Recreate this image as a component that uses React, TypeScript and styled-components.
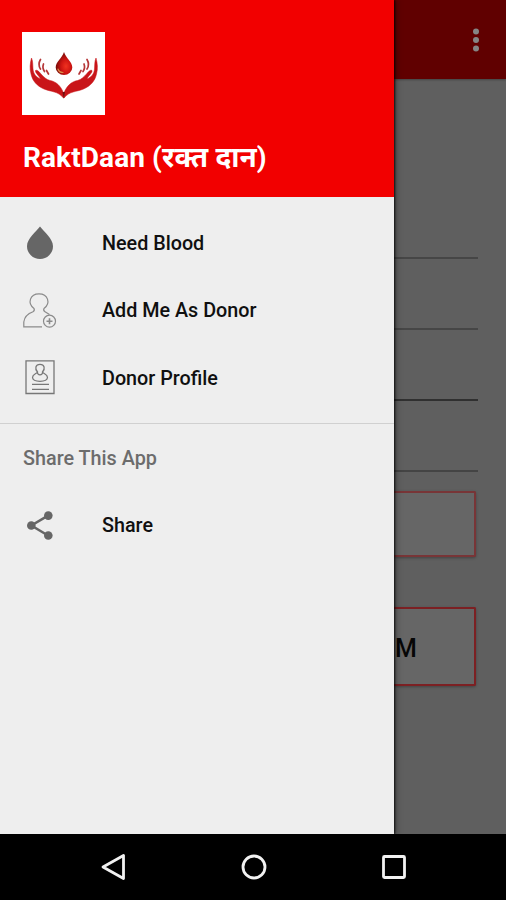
import React from "react";
import styled, { createGlobalStyle } from "styled-components";

const GlobalStyle = createGlobalStyle`
  * { box-sizing: border-box; }
  body { margin: 0; background: #000; }
`;

const Screen = styled.div`
  width: 506px;
  height: 900px;
  display: flex;
  flex-direction: column;
  overflow: hidden;
  font-family: Roboto, "Noto Sans", sans-serif;
`;

const Content = styled.div`
  height: 834px;
  display: flex;
`;

const Drawer = styled.aside`
  width: 394px;
  flex: none;
  background: #eeeeee;
  position: relative;
  z-index: 1;
  box-shadow: 1px 0 2px rgba(0, 0, 0, 0.85), 3px 0 6px rgba(0, 0, 0, 0.25);
`;

const Header = styled.header`
  height: 197px;
  padding: 32px 22px 0;
  background: #f20000;
`;

const Logo = styled.svg`
  display: block;
  width: 83px;
  height: 83px;
  background: #fff;
`;

const Title = styled.h1`
  margin: 24px 0 0 1px;
  font-size: 28px;
  line-height: 38px;
  font-weight: 700;
  letter-spacing: 0.1px;
  color: #fff;
  white-space: nowrap;
`;

const Menu = styled.ul`
  list-style: none;
  margin: 0;
  padding: 12.5px 0 10.5px;
`;

const MenuItem = styled.li`
  height: 67.5px;
  padding-left: 22px;
  display: flex;
  align-items: center;
  gap: 44px;
  font-size: 19.75px;
  font-weight: 500;
  color: #101010;
`;

const MenuIcon = styled.svg`
  width: 36px;
  height: 36px;
  flex: none;
`;

const Label = styled.span`
  padding-top: 1px;
  line-height: 24px;
  white-space: nowrap;
`;

const Section = styled.section`
  border-top: 1px solid #d0d0d0;
`;

const Subheader = styled.h2`
  margin: 0;
  padding: 1px 0 0 23px;
  height: 68.5px;
  line-height: 67px;
  font-size: 19.8px;
  font-weight: 500;
  color: #6c6c6c;
`;

const Page = styled.main`
  flex: 1;
  background: #5f5f5f;
  overflow: hidden;
`;

const AppBar = styled.div`
  height: 79px;
  background: #600000;
  display: flex;
  justify-content: flex-end;
  padding: 28px 26px 0 0;
  box-shadow: 0 1px 2px rgba(0, 0, 0, 0.3);
`;

const Overflow = styled.svg`
  width: 8px;
  height: 24px;
`;

const Fields = styled.div`
  padding: 109px 28px 0 0;
`;

const Field = styled.div<{ $line: string }>`
  height: 71px;
  border-bottom: 2px solid ${(p) => p.$line};
`;

const OutlineButton = styled.div<{ $height: number; $gap: number; $border: string }>`
  height: ${(p) => p.$height}px;
  margin: ${(p) => p.$gap}px 30px 0 0;
  padding: 3px 0 0 1px;
  border: 2px solid ${(p) => p.$border};
  border-left: 0;
  border-radius: 0 2px 2px 0;
  background: #666;
  box-shadow: 0 1px 3px rgba(0, 0, 0, 0.3);
  display: flex;
  align-items: center;
  font-size: 25px;
  font-weight: 500;
  color: #060606;
`;

const NavBar = styled.nav`
  height: 66px;
  background: #000;
  display: flex;
  justify-content: space-between;
  align-items: center;
  padding: 0 98px 0 99px;
`;

const NavIcon = styled.svg`
  width: 28px;
  height: 28px;
  fill: none;
  stroke: #f2f2f2;
  stroke-width: 2.8;
  stroke-linejoin: round;
`;

const Hand = () => (
  <>
    <path
      d="M9.500 26C8 31 7.500 37 9 42C10.500 49 15 54 22 57C29 60 36 59 41.500 66V61C39 54 34 49.500 28 48.500C24 47.500 22 45 19 42C17 39.500 15 37.500 13.500 38.500C13 41 17 43.500 18.500 47C14 45 11.500 42 11 37C10.700 33 11 29 9.500 26Z"
      fill="#c91519"
      stroke="#c91519"
      strokeWidth="0.5"
    />
    <path d="M18.500 27.500Q15.500 32.500 18.500 37M21.500 32Q20 36 22.500 39.500M24.500 38.500L26.500 42" fill="none" stroke="#b53638" strokeWidth="1.700" strokeLinecap="round" />
  </>
);

const BrandLogo = () => (
  <Logo viewBox="0 0 83 83">
    <defs>
      <radialGradient id="blood" cx="62%" cy="62%" r="60%">
        <stop offset="0" stopColor="#f03220" />
        <stop offset="0.5" stopColor="#cf1512" />
        <stop offset="1" stopColor="#780c08" />
      </radialGradient>
    </defs>
    <path d="M42 20C40 26.500 33.700 29.500 33.700 35.500A8.300 7.500 0 0 0 50.300 35.500C50.300 29.500 44 26.500 42 20Z" fill="url(#blood)" />
    <path d="M36 37Q37 40.500 41 40.500" fill="none" stroke="#d98a48" strokeWidth="1.200" strokeLinecap="round" />
    <Hand />
    <g transform="translate(83.500 0) scale(-1 1)">
      <Hand />
    </g>
    <path d="M40.500 60L41.700 67L43 60Z" fill="#6d1010" />
  </Logo>
);

const DropIcon = () => (
  <MenuIcon viewBox="0 0 36 36">
    <path d="M18 1.500C14 7 5 13.500 5 21.200A13 12.700 0 0 0 31 21.200C31 13.500 22 7 18 1.500Z" fill="#666" />
  </MenuIcon>
);

const AddPersonIcon = () => (
  <MenuIcon viewBox="0 0 36 36" fill="none" stroke="#8b8b8b" strokeWidth="1.200">
    <path d="M20 33.800H1.800V29C2.500 23 6 20.500 11 18.700Q13 17.500 12 15.500C5 10 8 .8 17 .8S29 10 22 15.500Q21 17.500 23 18.700L27.500 21.500" />
    <circle cx="27.500" cy="28.200" r="6" />
    <path d="M27.500 25.200V31.200M24.500 28.200H30.500" strokeWidth="1.600" />
  </MenuIcon>
);

const ProfileIcon = () => (
  <MenuIcon viewBox="0 0 36 36" fill="none" stroke="#777" strokeWidth="1.300">
    <path d="M4 .9H32V33.500H4Z" />
    <path d="M15.500 12C12.500 8.500 13.500 4.300 18 4.300S23.500 8.500 20.500 12C21.500 14 25.500 14 25.500 17.500Q25 21.300 18 21.300T10.500 17.500C10.500 14 14.500 14 15.500 12ZM15.300 12Q15.500 14.800 18 14.800T20.700 12" />
    <path d="M10 24.300H27M10 29.300H27" />
  </MenuIcon>
);

const ShareIcon = () => (
  <MenuIcon viewBox="0 0 36 36" fill="#666">
    <path d="M26 7.700L9.400 17.500L26 27.500" fill="none" stroke="#666" strokeWidth="2.500" />
    <circle cx="26.300" cy="7.600" r="4.300" />
    <circle cx="9.300" cy="17.500" r="4.300" />
    <circle cx="26.300" cy="27.500" r="4.300" />
  </MenuIcon>
);

const items = [
  { label: "Need Blood", Icon: DropIcon },
  { label: "Add Me As Donor", Icon: AddPersonIcon },
  { label: "Donor Profile", Icon: ProfileIcon },
];

const fieldLines = ["#464646", "#464646", "#303030", "#444444"];

export default function App() {
  return (
    <Screen>
      <GlobalStyle />
      <Content>
        <Drawer>
          <Header>
            <BrandLogo />
            <Title>RaktDaan (रक्त दान)</Title>
          </Header>
          <Menu>
            {items.map(({ label, Icon }) => (
              <MenuItem key={label}>
                <Icon />
                <Label>{label}</Label>
              </MenuItem>
            ))}
          </Menu>
          <Section>
            <Subheader>Share This App</Subheader>
            <MenuItem as="div">
              <ShareIcon />
              <Label>Share</Label>
            </MenuItem>
          </Section>
        </Drawer>
        <Page>
          <AppBar>
            <Overflow viewBox="0 0 8 24" fill="#858585">
              <circle cx="4" cy="3.500" r="3" />
              <circle cx="4" cy="12" r="3" />
              <circle cx="4" cy="20.500" r="3" />
            </Overflow>
          </AppBar>
          <Fields>
            {fieldLines.map((line, i) => (
              <Field key={i} $line={line} />
            ))}
          </Fields>
          <OutlineButton $height={66} $gap={19} $border="#783537" />
          <OutlineButton $height={79} $gap={50} $border="#7c2023">M</OutlineButton>
        </Page>
      </Content>
      <NavBar>
        <NavIcon viewBox="0 0 28 28">
          <path d="M4 14L24.500 2.500V25.500Z" />
        </NavIcon>
        <NavIcon viewBox="0 0 28 28">
          <circle cx="14" cy="14" r="11" />
        </NavIcon>
        <NavIcon viewBox="0 0 28 28">
          <rect x="3.500" y="3.500" width="21" height="21" rx="1" />
        </NavIcon>
      </NavBar>
    </Screen>
  );
}
